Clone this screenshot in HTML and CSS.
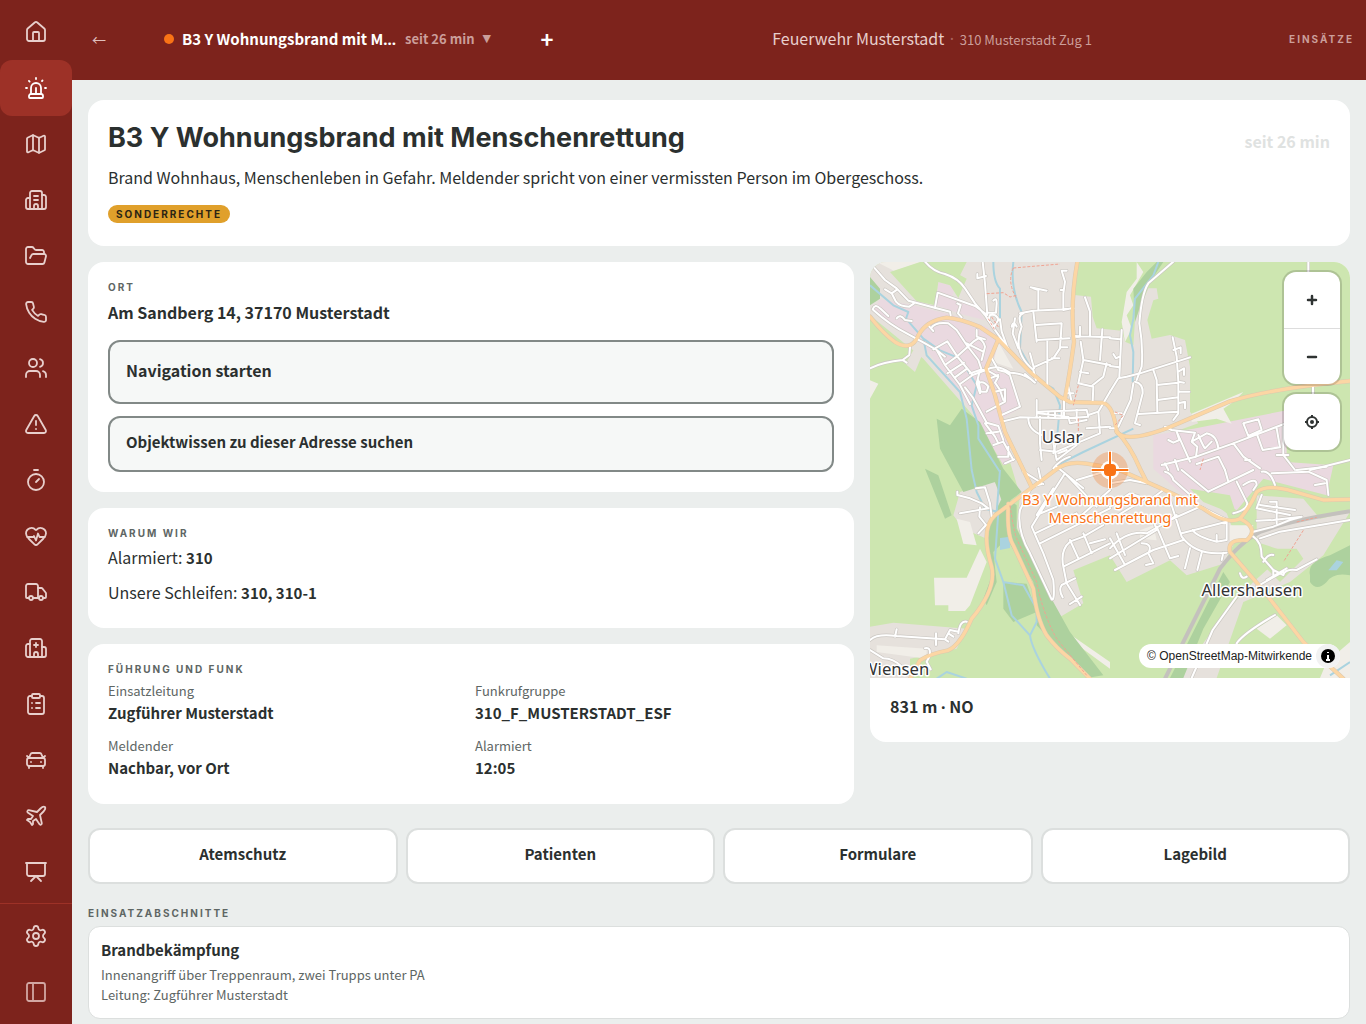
FILE: index.html
```html
<!DOCTYPE html>
<html lang="de">
<head>
<meta charset="utf-8">
<meta name="viewport" content="width=device-width, initial-scale=1">
<title>B3 Y Wohnungsbrand mit Menschenrettung</title>
<link rel="stylesheet" href="styles.css">
</head>
<body>
<div class="app">
  <nav class="rail" aria-label="Hauptnavigation">
    <div class="rail-group">
      <a class="rail-link" href="#start" aria-label="Start"><svg class="icon" viewBox="0 0 24 24"><path d="M15 21v-8a1 1 0 0 0-1-1h-4a1 1 0 0 0-1 1v8"/><path d="M3 10a2 2 0 0 1 .709-1.528l7-5.999a2 2 0 0 1 2.582 0l7 5.999A2 2 0 0 1 21 10v9a2 2 0 0 1-2 2H5a2 2 0 0 1-2-2z"/></svg></a>
      <a class="rail-link is-active" href="#einsatz" aria-label="Einsatz" aria-current="page"><svg class="icon" viewBox="0 0 24 24"><path d="M7 18v-6a5 5 0 1 1 10 0v6"/><path d="M5 21a1 1 0 0 0 1 1h12a1 1 0 0 0 1-1v-1a2 2 0 0 0-2-2H7a2 2 0 0 0-2 2z"/><path d="M21 12h1"/><path d="M18.5 4.5 18 5"/><path d="M2 12h1"/><path d="M12 2v1"/><path d="m4.929 4.929.707.707"/><path d="M12 12v6"/></svg></a>
      <a class="rail-link" href="#karte" aria-label="Karte"><svg class="icon" viewBox="0 0 24 24"><path d="M14.106 5.553a2 2 0 0 0 1.788 0l3.659-1.83A1 1 0 0 1 21 4.619v12.764a1 1 0 0 1-.553.894l-4.553 2.277a2 2 0 0 1-1.788 0l-4.212-2.106a2 2 0 0 0-1.788 0l-3.659 1.83A1 1 0 0 1 3 19.381V6.618a1 1 0 0 1 .553-.894l4.553-2.277a2 2 0 0 1 1.788 0z"/><path d="M15 5.764v15"/><path d="M9 3.236v15"/></svg></a>
      <a class="rail-link" href="#objekte" aria-label="Objekte"><svg class="icon" viewBox="0 0 24 24"><path d="M10 12h4"/><path d="M10 8h4"/><path d="M14 21v-3a2 2 0 0 0-4 0v3"/><path d="M6 10H4a2 2 0 0 0-2 2v7a2 2 0 0 0 2 2h16a2 2 0 0 0 2-2V9a2 2 0 0 0-2-2h-2"/><path d="M6 21V5a2 2 0 0 1 2-2h8a2 2 0 0 1 2 2v16"/></svg></a>
      <a class="rail-link" href="#dokumente" aria-label="Dokumente"><svg class="icon" viewBox="0 0 24 24"><path d="m6 14 1.5-2.9A2 2 0 0 1 9.24 10H20a2 2 0 0 1 1.94 2.5l-1.54 6a2 2 0 0 1-1.95 1.5H4a2 2 0 0 1-2-2V5a2 2 0 0 1 2-2h3.9a2 2 0 0 1 1.69.9l.81 1.2a2 2 0 0 0 1.67.9H18a2 2 0 0 1 2 2v2"/></svg></a>
      <a class="rail-link" href="#telefon" aria-label="Telefon"><svg class="icon" viewBox="0 0 24 24"><path d="M22 16.92v3a2 2 0 0 1-2.18 2 19.79 19.79 0 0 1-8.63-3.07 19.5 19.5 0 0 1-6-6 19.79 19.79 0 0 1-3.07-8.67A2 2 0 0 1 4.11 2h3a2 2 0 0 1 2 1.72 12.84 12.84 0 0 0 .7 2.81 2 2 0 0 1-.45 2.11L8.09 9.91a16 16 0 0 0 6 6l1.27-1.27a2 2 0 0 1 2.11-.45 12.84 12.84 0 0 0 2.81.7A2 2 0 0 1 22 16.92z"/></svg></a>
      <a class="rail-link" href="#personal" aria-label="Personal"><svg class="icon" viewBox="0 0 24 24"><path d="M16 21v-2a4 4 0 0 0-4-4H6a4 4 0 0 0-4 4v2"/><circle cx="9" cy="7" r="4"/><path d="M22 21v-2a4 4 0 0 0-3-3.87"/><path d="M16 3.13a4 4 0 0 1 0 7.75"/></svg></a>
      <a class="rail-link" href="#gefahren" aria-label="Gefahren"><svg class="icon" viewBox="0 0 24 24"><path d="m21.73 18-8-14a2 2 0 0 0-3.48 0l-8 14A2 2 0 0 0 4 21h16a2 2 0 0 0 1.73-3"/><path d="M12 9v4"/><path d="M12 17h.01"/></svg></a>
      <a class="rail-link" href="#atemschutz" aria-label="Atemschutz"><svg class="icon" viewBox="0 0 24 24"><path d="M10 2h4"/><path d="m12 14 3-3"/><circle cx="12" cy="14" r="8"/></svg></a>
      <a class="rail-link" href="#patienten" aria-label="Patienten"><svg class="icon" viewBox="0 0 24 24"><path d="M2 9.5a5.5 5.5 0 0 1 9.591-3.676.56.56 0 0 0 .818 0A5.49 5.49 0 0 1 22 9.5c0 2.29-1.5 4-3 5.5l-5.492 5.313a2 2 0 0 1-3 .019L5 15c-1.5-1.5-3-3.2-3-5.5"/><path d="M3.22 13H9.5l.5-1 2 4.5 2-7 1.5 3.5h5.27"/></svg></a>
      <a class="rail-link" href="#fahrzeuge" aria-label="Fahrzeuge"><svg class="icon" viewBox="0 0 24 24"><path d="M14 18V6a2 2 0 0 0-2-2H4a2 2 0 0 0-2 2v11a1 1 0 0 0 1 1h2"/><path d="M15 18H9"/><path d="M19 18h2a1 1 0 0 0 1-1v-3.65a1 1 0 0 0-.22-.624l-3.48-4.35A1 1 0 0 0 17.52 8H14"/><circle cx="17" cy="18" r="2"/><circle cx="7" cy="18" r="2"/></svg></a>
      <a class="rail-link" href="#kliniken" aria-label="Kliniken"><svg class="icon" viewBox="0 0 24 24"><path d="M12 7v4"/><path d="M14 21v-3a2 2 0 0 0-4 0v3"/><path d="M14 9h-4"/><path d="M18 11h2a2 2 0 0 1 2 2v6a2 2 0 0 1-2 2H4a2 2 0 0 1-2-2v-9a2 2 0 0 1 2-2h2"/><path d="M18 21V5a2 2 0 0 0-2-2H8a2 2 0 0 0-2 2v16"/></svg></a>
      <a class="rail-link" href="#formulare" aria-label="Formulare"><svg class="icon" viewBox="0 0 24 24"><rect x="8" y="2" width="8" height="4" rx="1"/><path d="M16 4h2a2 2 0 0 1 2 2v14a2 2 0 0 1-2 2H6a2 2 0 0 1-2-2V6a2 2 0 0 1 2-2h2"/><path d="M12 11h4"/><path d="M12 16h4"/><path d="M8 11h.01"/><path d="M8 16h.01"/></svg></a>
      <a class="rail-link" href="#rettungskarten" aria-label="Rettungskarten"><svg class="icon" viewBox="0 0 24 24"><path d="m21 8-2 2-1.5-3.7A2 2 0 0 0 15.646 5H8.4a2 2 0 0 0-1.903 1.257L5 10 3 8"/><path d="M7 14h.01"/><path d="M17 14h.01"/><rect x="3" y="10" width="18" height="8" rx="2"/><path d="M5 18v2"/><path d="M19 18v2"/></svg></a>
      <a class="rail-link" href="#luft" aria-label="Luftfahrzeuge"><svg class="icon" viewBox="0 0 24 24"><path d="M17.8 19.2 16 11l3.5-3.5C21 6 21.5 4 21 3c-1-.5-3 0-4.5 1.5L13 8 4.8 6.2c-.5-.1-.9.1-1.1.5l-.3.5c-.2.5-.1 1 .3 1.3L9 12l-2 3H4l-1 1 3 2 2 3 1-1v-3l3-2 3.5 5.3c.3.4.8.5 1.3.3l.5-.2c.4-.3.6-.7.5-1.2z"/></svg></a>
      <a class="rail-link" href="#lagebild" aria-label="Lagebild"><svg class="icon" viewBox="0 0 24 24"><path d="M2 3h20"/><path d="M21 3v11a2 2 0 0 1-2 2H5a2 2 0 0 1-2-2V3"/><path d="m7 21 5-5 5 5"/></svg></a>
    </div>
    <div class="rail-group rail-foot">
      <a class="rail-link" href="#einstellungen" aria-label="Einstellungen"><svg class="icon" viewBox="0 0 24 24"><path d="M9.671 4.136a2.34 2.34 0 0 1 4.659 0 2.34 2.34 0 0 0 3.319 1.915 2.34 2.34 0 0 1 2.33 4.033 2.34 2.34 0 0 0 0 3.831 2.34 2.34 0 0 1-2.33 4.033 2.34 2.34 0 0 0-3.319 1.915 2.34 2.34 0 0 1-4.659 0 2.34 2.34 0 0 0-3.32-1.915 2.34 2.34 0 0 1-2.33-4.033 2.34 2.34 0 0 0 0-3.831A2.34 2.34 0 0 1 6.35 6.051a2.34 2.34 0 0 0 3.319-1.915"/><circle cx="12" cy="12" r="3"/></svg></a>
      <button class="rail-link rail-toggle" type="button" aria-label="Leiste ausklappen"><svg class="icon" viewBox="0 0 24 24"><rect x="3" y="3" width="18" height="18" rx="2"/><path d="M9 3v18"/></svg></button>
    </div>
  </nav>

  <div class="content">
    <header class="topbar">
      <div class="topbar-left">
        <button class="back" type="button" aria-label="Zurück">←</button>
        <button class="incident-switch" type="button" title="B3 Y Wohnungsbrand mit Menschenrettung">
          <span class="dot"></span>
          <span class="incident-name">B3 Y Wohnungsbrand mit M<span class="latin">…</span></span>
          <span class="incident-age">seit 26 min</span>
          <span class="caret">▼</span>
        </button>
        <button class="add" type="button" aria-label="Neuer Einsatz">+</button>
      </div>
      <p class="station">Feuerwehr Musterstadt <span class="station-sep latin">·</span> <span class="station-unit">310 Musterstadt Zug 1</span></p>
      <p class="topbar-section">EINSÄTZE</p>
    </header>

    <main class="page">
      <section class="card hero">
        <div class="hero-head">
          <h1 class="hero-title">B3 Y Wohnungsbrand mit Menschenrettung</h1>
          <p class="hero-age">seit 26 min</p>
        </div>
        <p class="hero-text">Brand Wohnhaus, Menschenleben in Gefahr. Meldender spricht von einer vermissten Person im Obergeschoss.</p>
        <span class="badge">SONDERRECHTE</span>
      </section>

      <div class="columns">
        <div class="stack">
          <section class="card">
            <h2 class="eyebrow">ORT</h2>
            <p class="address">Am Sandberg 14, 37170 Musterstadt</p>
            <div class="actions">
              <button class="action action-large" type="button">Navigation starten</button>
              <button class="action" type="button">Objektwissen zu dieser Adresse suchen</button>
            </div>
          </section>
          <section class="card">
            <h2 class="eyebrow">WARUM WIR</h2>
            <p class="reason">Alarmiert: <strong>310</strong></p>
            <p class="reason">Unsere Schleifen: <strong>310, 310-1</strong></p>
          </section>
          <section class="card">
            <h2 class="eyebrow">FÜHRUNG UND FUNK</h2>
            <dl class="facts">
              <div><dt>Einsatzleitung</dt><dd>Zugführer Musterstadt</dd></div>
              <div><dt>Funkrufgruppe</dt><dd>310_F_MUSTERSTADT_ESF</dd></div>
              <div><dt>Meldender</dt><dd>Nachbar, vor Ort</dd></div>
              <div><dt>Alarmiert</dt><dd>12:05</dd></div>
            </dl>
          </section>
        </div>

        <section class="map-card" aria-label="Karte">
          <div class="map">
            <svg class="map-canvas" viewBox="0 0 1440 1248" preserveAspectRatio="xMidYMid slice" role="img" aria-label="Einsatzort auf der Karte">
              <defs>
                <g id="streets">
                  <g transform="translate(0 -6)">
                    <path d="M10 20 45 60 80 85 115 122 200 145 240 155 242 166M45 88 65 100 82 88M65 100 78 125Q90 140 118 140L132 130"/>
                    <path d="M165 5Q190 35 225 42 265 55 285 85L315 130 345 165 375 210 400 245M338 5 345 70 352 165M322 42V55L348 48M195 143 203 98 315 138 348 162M262 130 272 135 264 160 275 172"/>
                    <path d="M8 148Q15 130 30 145L55 168M10 150Q60 195 110 220L165 250 200 270 225 315 270 375 300 432M80 175Q90 160 105 180L125 183M178 200 190 213M183 205Q195 185 235 190L260 210 290 255 325 300 335 330M190 268 232 244 262 290 308 345 348 330M200 270 225 290M225 315 260 290 310 245 325 235Q340 240 345 260L335 300M232 340 282 308M255 352 292 325M270 372 308 345M290 250 340 275M320 210V230L345 238M360 165Q380 160 385 180L372 200 355 180ZM370 122Q380 110 380 130L378 158H352M400 245 415 265M390 178 395 215 412 262"/>
                    <path d="M0 325Q40 305 98 300L118 285 120 262M98 300 110 308"/>
                    <path d="M300 340 330 330 348 330Q380 310 420 338 465 340 495 368L465 342M285 382 308 412 350 488 385 498 400 540M325 370Q340 360 355 380L350 395H332L325 360M350 330 385 350 375 368 390 390 400 420M360 355 385 345M375 395 405 388V425L350 455M385 330 405 335 420 345 450 440 395 465M365 295 385 330M330 330 320 370 330 400M345 490 375 530 385 550M350 520 385 515M370 555 400 545 430 600M385 590H415V560M405 610 432 598"/>
                    <path d="M590 32H575L585 65 580 100V150L605 145M580 90H572M450 160 490 152 580 148 610 145M490 85 505 90V150M482 82 530 92M490 155 500 245M460 160Q440 165 455 200 425 275 490 330L498 360M497 195 575 190M500 240 598 235M532 240V375M575 190 570 265 550 295 495 320M480 280 492 325M570 262H592M545 295H568M435 175 428 220 445 265M425 200Q430 180 440 200"/>
                    <path d="M645 112 660 155V230M630 200V230L615 232M610 228 720 232M697 208 690 300M632 245 640 300 625 370 670 380 668 425M640 300 720 315M665 378 700 350 710 310M630 335 655 340M595 380 605 425M590 400H610M395 485 450 472 590 475 655 470 650 450 505 455M500 420V470M505 460 595 470 600 490 650 480M535 455V475M555 455V475M575 455V475M620 450V480M582 420V475M475 475Q475 510 515 525M510 470V550L515 600M655 465 685 455 690 520 560 575 510 570M685 455 720 395M650 505 720 500M550 550 560 600 620 555M565 580 590 570"/>
                    <path d="M550 625Q570 600 600 590M560 540 550 580"/>
                  </g>
                  <g transform="translate(720 -6)">
                    <path class="wide" d="M190 5 115 70Q95 100 88 190 100 260 95 320L80 360M70 370 62 420 25 500"/>
                    <path d="M0 235 30 238M35 210 28 350M0 318 28 322M10 282 18 295 28 290M0 395 25 355 50 350 90 340 240 292M188 232 200 290 205 365V460L190 480M190 270 212 262V280M205 335 222 325V345M205 365 222 368M205 395H238M205 430 225 425V445M205 455 85 462M130 330 140 360 142 455M140 375 205 368M142 420 205 412M75 365Q100 370 98 400L75 490 90 495M0 505H18M15 460H35"/>
                    <path d="M165 500 185 510 255 518 245 545 262 560 258 590 370 550 522 492M175 540 190 548 208 540 200 515 240 605M245 545 290 520Q320 525 325 565M265 525Q280 560 285 565L305 545M400 490 445 478 455 510 415 528ZM440 520 458 570 510 562 500 505M520 500V585L555 630M370 550 400 590 450 625M405 600H420M155 615 258 590M260 612 325 590 345 630M500 585H535M600 630 720 600M165 610 175 630M195 600 205 630"/>
                    <path d="M595 5V40M609 372V402"/>
                  </g>
                  <g transform="translate(0 624)">
                    <path d="M262 65V75L300 85 335 100 355 115 270 130M318 55 345 52 360 100 365 140M330 112 328 140 348 165 325 190M460 5 520 42M505 -5 515 42 485 50M485 50 450 120Q440 180 480 250L545 388Q555 395 550 330L520 250 485 170 540 80 585 10M500 135 560 110M495 190 620 130M500 135 550 55M510 220 720 115M600 210 625 265M580 290Q570 240 600 215L640 200 700 165M580 290 720 220M640 190 665 250M660 220 705 208M580 290 590 340 630 405M615 325 575 345Q565 360 578 382M600 402 635 380M585 10 680 110M560 -10 640 55M620 30 720 0M630 140 720 60"/>
                    <path d="M0 510Q20 490 80 498L225 508 240 480 265 485M198 490V525M75 500 80 478M225 508 235 515M265 490Q270 450 290 455M235 490 250 500M0 540 40 565Q70 565 95 590M165 535Q185 530 178 560L170 575 182 598"/>
                  </g>
                  <g transform="translate(720 624)">
                    <path d="M0 40 60 30 110 40M0 110 60 70 120 90 160 60M0 150 100 90M0 235Q50 180 110 190L180 150 270 110M0 265 140 180 130 150M15 300 130 240 220 210M0 205 45 285M20 190 45 255M95 220Q130 220 115 250L130 280 108 285M140 170 180 265 205 258M180 90 215 200Q260 260 350 248M180 150 200 135M215 190 350 155V210L320 215Q260 200 248 180M320 195V215M240 235 225 295M275 248 262 300M340 248 335 270M350 150 270 110M165 5Q185 10 190 30L235 70M215 0 295 65 430 0M345 0 355 35M380 35 412 100Q410 120 370 130M400 45Q440 20 440 45L430 60M455 5Q480 0 495 45M595 5 650 30 655 75M615 45 645 40M485 10 595 5M560 0 650 -10"/>
                    <path d="M455 75 440 115 540 135M480 95H500V160M450 105 555 120M440 152 490 150 575 140M430 185 490 170 540 150 575 140M450 205 510 185 720 150M430 200Q455 215 455 260L490 300V320M490 255Q475 250 460 275M490 300 520 315Q525 295 560 300L620 268M470 330 530 295M390 310Q395 330 410 320M380 380 308 480 245 624M380 520Q400 490 495 435M440 350 520 305"/>
                  </g>
                </g>
                <g id="primary">
                  <path d="M0 164Q40 215 75 240 125 270 145 220 170 175 230 167 270 170 330 195L385 232 480 330 570 405 600 420 700 423Q730 430 740 510 770 545 900 495L1080 418Q1200 380 1440 357"/>
                  <path d="M622 0Q600 120 612 240 600 330 585 410M385 232 348 320 375 400 405 510 485 675M740 508Q780 550 810 620L830 660Q900 690 1000 740 1070 790 1110 770 1140 735 1160 690 1190 665 1270 688L1360 714 1440 712M1110 770Q1170 800 1130 835 1070 830 1080 870L1180 985 1300 1140 1420 1250"/>
                  <path d="M120 1250 150 1195Q180 1175 235 1165 270 1150 305 1070 380 980 365 915 330 800 375 760L555 625Q590 595 650 605L740 620 830 660M415 725Q410 820 430 850L490 980Q500 1070 530 1120 560 1160 600 1190L660 1250"/>
                </g>
              </defs>
              <rect class="green" width="1440" height="1248"/>
              <g class="urban">
                <path d="M290 0H622L613 99 663 104 668 164 680 199 755 206 765 239 790 250 795 174 835 79H860L865 110 850 115 832 174 845 230 900 219 945 234 960 314V449L985 484 870 525V600L1000 700 1070 754 1100 830 1060 905 950 940 900 895 770 960 720 880 610 925 640 1024 570 1065 440 795 450 700 420 600 300 450 160 290 0 160V0H180L220 40 250 80Z"/>
                <path d="M110 260 160 270 135 330 100 300ZM270 690 370 655 400 700 350 830 280 800 250 760Z"/>
                <path d="M0 1094 70 1082 290 1100 260 1160 120 1190 120 1248H0ZM1160 700 1300 710 1350 770 1440 750 1360 880 1260 960 1120 1020 1040 1248 930 1248Q1050 1060 1150 960L1250 870 1160 840Z"/>
              </g>
              <g class="pink">
                <path d="M30 112 130 130 250 160 350 194 400 240 350 320 420 340 450 440 395 470 430 600 400 610 300 440 280 410 160 250 10 145Z"/>
                <path d="M205 60 255 75 245 110 320 135 345 175 270 155 200 130Z"/>
                <path d="M850 520 970 500 1250 445V600L1390 610 1370 700 1180 650 1100 745 1010 690 940 700 850 620Z"/>
              </g>
              <g class="field">
                <path d="M20 0H175L140 40 150 70 60 20ZM385 240 430 320 370 300ZM0 355 25 365 0 410ZM192 947H290L330 860 350 900 300 1030 285 1047H235V1030H195ZM260 770 300 780 320 850 280 845ZM20 1150 170 1160V1190L20 1170ZM800 0 820 30 780 100 790 130 770 160 785 200 765 240 755 180 770 90 800 50ZM965 455 1120 390 1090 420 1060 440 1085 485 1040 470 965 480ZM590 1110 720 1200V1220L590 1125ZM1080 790H1150L1140 830 1080 840ZM1160 1100 1220 1060 1250 1090 1200 1130ZM1370 1200 1440 1140V1248H1350ZM810 805 850 790 860 835 810 830Z"/>
              </g>
              <path class="green" d="M60 30 150 0H200L290 50 265 108 240 70 205 60 195 130 140 118ZM0 264 80 235 130 265 110 300 0 330ZM1060 910 1110 850 1200 880 1150 940 1090 1010 1040 1000ZM1160 860 1280 860 1300 890 1230 960 1170 900ZM375 880 430 860 460 940 400 960ZM960 680 1080 700 1100 760 1000 720Z"/>
              <g class="forest">
                <path d="M0 45 30 80V110L0 130ZM275 440 330 480 350 520 400 620 455 690 400 730 375 660 280 690 210 560 200 470 240 490ZM165 620 205 640 245 760 225 770ZM400 700 440 730 440 800 550 1020 600 1110 700 1240 650 1248 500 1090 490 960 410 830 370 870 380 960 350 1030 340 1010 370 930 350 830 360 780ZM400 960 470 965 500 1050 430 1080 400 1040ZM1320 940Q1310 900 1380 880L1440 850V940Q1390 930 1370 960 1340 990 1320 960ZM830 30 860 0H880L820 90 805 150 795 180 790 80ZM1060 930 1080 960 1000 1100 940 1248H900Z"/>
              </g>
              <g class="water">
                <path d="M0 70 70 130 115 150 108 170 160 230 210 265 270 290 320 370 305 430 325 490 325 530 390 630M160 230 170 280 270 390 290 470 305 624 320 690 345 740 385 750 375 890 400 960 425 1060 480 1120Q485 1160 540 1250M370 0Q370 60 390 80V180M430 0Q420 80 455 150L450 260 500 350 550 380 570 430 560 540M390 624 380 750M400 960 460 970 500 1040 500 1080 480 1120M865 0 850 40 795 110 790 170 780 220 790 270 788 360M560 610 640 570 790 500M200 1250 230 1230 290 1250M1380 1240 1440 1200"/>
              </g>
              <path class="lake" d="M390 828 420 824V858L390 864ZM1375 925 1400 895 1420 900 1400 925Z"/>
              <path class="railway" d="M1440 748Q1260 775 1170 810 1110 840 1050 920L880 1260"/>
              <use href="#streets" class="street-case"/>
              <use href="#primary" class="primary-case"/>
              <use href="#streets" class="street"/>
              <use href="#primary" class="primary"/>
              <path class="trail" d="M430 18 570 6M430 18Q410 60 440 110M350 95 400 92 420 105 440 100M355 170 375 205M365 165 385 195M625 370 610 430M625 470V540M420 730Q430 800 440 830L500 960Q520 1060 560 1130L650 1240M735 450 760 460 735 490M1300 805 1240 900M1000 590 990 624M1280 780 1340 766"/>
              <g class="place">
                <text x="576" y="544">Uslar</text>
                <text x="1146" y="1001">Allershausen</text>
                <text x="77" y="1239">Wiensen</text>
              </g>
              <g class="marker">
                <circle class="marker-halo" cx="720" cy="624" r="54"/>
                <path class="marker-case" d="M663 624H777M720 567V681"/>
                <circle class="marker-ring" cx="720" cy="624" r="28"/>
                <path class="marker-cross" d="M665 624H775M720 569V679"/>
                <rect class="marker-core" x="702" y="606" width="36" height="36" rx="12"/>
                <text x="720" y="729">B3 Y Wohnungsbrand mit</text>
                <text x="720" y="783">Menschenrettung</text>
              </g>
            </svg>
            <div class="map-controls">
              <div class="map-group">
                <button class="map-button" type="button" aria-label="Vergrößern"><svg class="glyph" viewBox="0 0 20 20"><path d="M10 6v8M6 10h8"/></svg></button>
                <button class="map-button" type="button" aria-label="Verkleinern"><svg class="glyph" viewBox="0 0 20 20"><path d="M6 10h8"/></svg></button>
              </div>
              <div class="map-group">
                <button class="map-button" type="button" aria-label="Standort"><svg class="glyph locate" viewBox="0 0 20 20"><circle cx="10" cy="10" r="5"/><circle class="locate-core" cx="10" cy="10" r="2"/><path d="M10 3v2M10 15v2M3 10h2M15 10h2"/></svg></button>
              </div>
            </div>
            <div class="attribution">
              <a href="#osm">© OpenStreetMap-Mitwirkende</a>
              <button class="info" type="button" aria-label="Kartenhinweise"><svg viewBox="0 0 24 24"><circle cx="12" cy="12" r="7"/><path d="M12 8v1M11 12h1v4M10 16h4"/></svg></button>
            </div>
          </div>
          <p class="distance">831 m <span class="latin">·</span> NO</p>
        </section>
      </div>

      <div class="shortcuts">
        <button class="shortcut" type="button">Atemschutz</button>
        <button class="shortcut" type="button">Patienten</button>
        <button class="shortcut" type="button">Formulare</button>
        <button class="shortcut" type="button">Lagebild</button>
      </div>

      <section>
        <h2 class="eyebrow">EINSATZABSCHNITTE</h2>
        <article class="sector">
          <h3 class="sector-name">Brandbekämpfung</h3>
          <p class="sector-text">Innenangriff über Treppenraum, zwei Trupps unter PA</p>
          <p class="sector-text">Leitung: Zugführer Musterstadt</p>
        </article>
      </section>
    </main>
  </div>
</div>
</body>
</html>
```
FILE: styles.css
```css
:root {
  --brand: #7d231c;
  --brand-active: #9d3127;
  --ink: #2b302f;
  --muted: #5e6664;
  --line: #dcdfde;
  --canvas: #ebeeed;
  --orange: #f97316;
  --sans: "Noto Sans CJK SC", "Noto Sans", sans-serif;
  --display: Inter, "Liberation Sans", sans-serif;
}

* { box-sizing: border-box; }

body {
  margin: 0;
  background: var(--canvas);
  color: var(--ink);
  font: 400 16px/24px var(--sans);
}

h1, h2, h3, p, dl, dd { margin: 0; }

button {
  margin: 0;
  padding: 0;
  border: 0;
  background: none;
  color: inherit;
  font: inherit;
  cursor: pointer;
}

strong { font-size: 15px; font-weight: 700; }

/* Punctuation that the CJK face would set full-width */
.latin { font-family: "Noto Sans", sans-serif; line-height: 1; }

.app { display: flex; align-items: flex-start; }

/* Navigation rail */
.rail {
  position: sticky;
  top: 0;
  display: flex;
  flex: none;
  flex-direction: column;
  justify-content: space-between;
  width: 72px;
  height: 100vh;
  padding: 4px 0;
  background: var(--brand);
}

.rail-group { display: flex; flex-direction: column; }
.rail-foot { padding-top: 4px; border-top: 1px solid var(--brand-active); }

.rail-link {
  display: flex;
  align-items: center;
  justify-content: center;
  width: 100%;
  height: 56px;
  border-radius: 12px;
  color: #e8cfcc;
}

.rail-link.is-active { background: var(--brand-active); color: #fff; }
.rail-toggle { color: #d2a7a3; }

.icon {
  width: 24px;
  height: 24px;
  fill: none;
  stroke: currentColor;
  stroke-width: 1.8;
  stroke-linecap: round;
  stroke-linejoin: round;
}

.content { flex: 1; min-width: 0; }

/* Top bar */
.topbar {
  display: flex;
  align-items: center;
  justify-content: space-between;
  height: 80px;
  padding: 0 12px 2px;
  background: var(--brand);
  color: #fff;
}

.topbar-left { display: flex; align-items: center; }

.back { width: 30px; height: 56px; color: #dfbfbc; font-size: 14px; }

.incident-switch {
  display: flex;
  align-items: center;
  gap: 8px;
  height: 56px;
  margin-left: 50px;
  font-size: 15px;
  font-weight: 700;
  white-space: nowrap;
}

.dot { flex: none; width: 10px; height: 10px; border-radius: 50%; background: var(--orange); }
.incident-name { min-width: 215px; text-align: left; }
.incident-age { color: #cb9e9a; font-size: 13px; font-weight: 700; }
.caret { color: #cb9e9a; font: 11px/16px "DejaVu Sans", sans-serif; }
.add { width: 56px; height: 56px; margin-left: 28px; padding-bottom: 2px; font-size: 22px; font-weight: 700; }
.station { color: #e8cfcc; white-space: nowrap; }
.station-sep { margin: 0 2px; color: #a8625c; }
.station-unit { color: #cb9e9a; font-size: 13px; }

.topbar-section {
  color: #cb9e9a;
  font: 700 10px/16px var(--display);
  letter-spacing: 2px;
}

/* Page and cards */
.page { padding: 20px 16px 5px; }

.card { padding: 20px; border-radius: 16px; background: #fff; }

.hero { min-height: 146px; margin-bottom: 16px; }
.hero-head { display: flex; justify-content: space-between; gap: 16px; margin-bottom: 9px; }
.hero-title { font: 700 27px/36px var(--display); }
.hero-age { padding-top: 9px; color: #dfe2e1; font-weight: 700; white-space: nowrap; }

.badge {
  display: inline-block;
  margin-top: 16px;
  padding: 0 8px;
  border-radius: 9px;
  background: #e0a02b;
  color: #2b2414;
  font: 700 10px/18px var(--display);
  letter-spacing: 2px;
  vertical-align: top;
}

.columns {
  display: grid;
  grid-template-columns: minmax(0, 1fr) 480px;
  align-items: start;
  gap: 16px;
}

.stack { display: flex; flex-direction: column; gap: 16px; }

.eyebrow {
  color: var(--muted);
  font: 700 10px/10px var(--display);
  letter-spacing: 2px;
}

.address { margin-top: 7px; line-height: 26px; font-weight: 700; }
.actions { display: flex; flex-direction: column; gap: 12px; margin-top: 15px; }

.action {
  height: 56px;
  padding: 0 16px 4px;
  border: 2px solid #828987;
  border-radius: 12px;
  background: #f6f8f7;
  font-size: 15px;
  font-weight: 700;
  text-align: left;
}

.action-large { height: 64px; font-size: 16px; }

.reason { padding: 6px 0 2px; line-height: 27px; }

.facts {
  display: grid;
  grid-template-columns: 1fr 1fr;
  gap: 11px 8px;
  padding: 8px 0 3px;
}

dt { color: var(--muted); font-size: 13px; line-height: 18px; }
dd { font-size: 15px; font-weight: 700; line-height: 26px; }

/* Map */
.map-card { overflow: hidden; border-radius: 16px; background: #fff; }
.map { position: relative; height: 416px; }
.map-canvas { display: block; width: 100%; height: 100%; }

.green { fill: #cde6b0; }
.urban { fill: #e6e1dc; }
.pink { fill: #ead9e0; }
.field { fill: #f1eee8; }
.forest { fill: #add19e; }
.lake { fill: #aad3df; }
.water { fill: none; stroke: #aad3df; stroke-width: 6; stroke-linejoin: round; }
.railway { fill: none; stroke: #c4c1bd; stroke-width: 12; }
.street, .street-case, .primary, .primary-case { fill: none; stroke-linecap: round; stroke-linejoin: round; }
.street { stroke: #fff; stroke-width: 6; }
.street-case { stroke: #cbc7c2; stroke-width: 10; }
.primary { stroke: #fcd6a4; stroke-width: 10; }
.primary-case { stroke: #dcc9ae; stroke-width: 13; }
.trail { fill: none; stroke: #f0a392; stroke-width: 3; stroke-dasharray: 9 5; }

.place, .marker text {
  font: 400 50px "Noto Sans", sans-serif;
  text-anchor: middle;
  paint-order: stroke;
  stroke: #fff;
  stroke-width: 9;
  stroke-linejoin: round;
}

.place { fill: #333; }
.marker text { fill: var(--orange); font-size: 44px; }
.marker-halo { fill: var(--orange); fill-opacity: .28; }
.marker-ring { fill: #fff; }
.marker-case { stroke: #fff; stroke-width: 12; }
.marker-cross { stroke: var(--orange); stroke-width: 6; }
.marker-core { fill: var(--orange); }

.map-controls {
  position: absolute;
  top: 10px;
  right: 10px;
  display: flex;
  flex-direction: column;
  gap: 10px;
}

.map-group {
  overflow: hidden;
  border-radius: 12px;
  background: #fff;
  box-shadow: 0 0 0 2px rgba(0, 0, 0, .15);
}

.map-button { display: flex; align-items: center; justify-content: center; width: 56px; height: 56px; }
.map-button + .map-button { border-top: 1px solid #ddd; }

.glyph { width: 20px; height: 20px; fill: none; stroke: #2f3332; stroke-width: 2.5; stroke-linecap: round; }
.locate { stroke-width: 2; stroke-linecap: butt; }
.locate-core { fill: #2f3332; stroke: none; }

.attribution {
  position: absolute;
  right: 10px;
  bottom: 10px;
  display: flex;
  align-items: center;
  height: 24px;
  padding-left: 8px;
  border-radius: 12px;
  background: #fff;
  font: 12px/20px "Liberation Sans", sans-serif;
}

.attribution a { margin-right: 4px; color: #222; text-decoration: none; }
.info { width: 24px; height: 24px; border-radius: 50%; background: #f2f2f2; }
.info svg { display: block; fill: #000; stroke: #fff; stroke-width: 2; }
.info circle { stroke: none; }
.info path { fill: none; }

.distance { padding: 16px 20px 24px; font-weight: 700; }

/* Shortcuts and sectors */
.shortcuts {
  display: grid;
  grid-template-columns: repeat(4, 1fr);
  gap: 8px;
  margin: 24px 0;
}

.shortcut {
  height: 56px;
  padding-bottom: 4px;
  border: 2px solid var(--line);
  border-radius: 12px;
  background: #fff;
  font-size: 15px;
  font-weight: 700;
}

.sector {
  margin-top: 8px;
  padding: 11px 12px 13px;
  border: 1px solid var(--line);
  border-radius: 12px;
  background: #fff;
}

.sector-name { margin-bottom: 3px; font-size: 15px; font-weight: 700; line-height: 24px; }
.sector-text { color: var(--muted); font-size: 13px; line-height: 20px; }
```
